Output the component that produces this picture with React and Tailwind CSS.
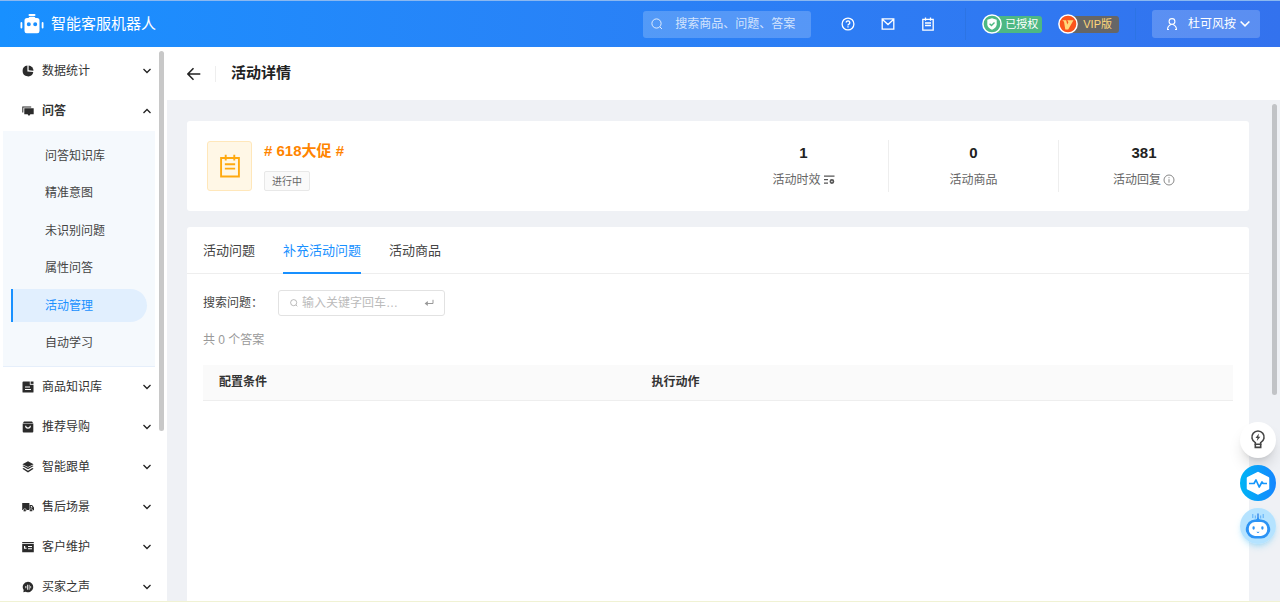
import { useState } from 'react';

const sections = [
  { id: 'product', label: '商品知识库', icon: 'book' },
  { id: 'recommend', label: '推荐导购', icon: 'bag' },
  { id: 'follow', label: '智能跟单', icon: 'layers' },
  { id: 'aftersale', label: '售后场景', icon: 'truck' },
  { id: 'customer', label: '客户维护', icon: 'card' },
  { id: 'voice', label: '买家之声', icon: 'voice' },
];

const qaItems = ['问答知识库', '精准意图', '未识别问题', '属性问答', '活动管理', '自动学习'];

const tabs = ['活动问题', '补充活动问题', '活动商品'];

const MenuIcon = ({ name }) => (
  <svg viewBox="0 0 12 12" className="h-3 w-3 shrink-0 fill-[#2b2b2b]" aria-hidden="true">
    {name === 'pie' && (
      <>
        <path d="M5.4.6A5.4 5.4 0 1 0 11.3 7L5.4 6.4z" />
        <path d="M6.6.5v4.8l4.9.5A5.2 5.2 0 0 0 6.6.5z" />
      </>
    )}
    {name === 'chat' && (
      <>
        <path d="M.3 1.5h8.9v1H1.3v5h-1z" />
        <path d="M2.3 3.3h9.4v6H8.4L7 10.9 5.6 9.3H2.3z" />
      </>
    )}
    {name === 'book' && (
      <>
        <path fillRule="evenodd" d="M1.500.5h6.300v3.200h3.700v7.300a.6.6 0 0 1-.6.6H1.100a.6.6 0 0 1-.6-.6V1.500a1 1 0 0 1 1-1zM3 5.600v1h5v-1zm0 2.500v1h6v-1z" />
        <path d="M8.600.5h2.900v2.400H8.600z" />
      </>
    )}
    {name === 'bag' && (
      <path fillRule="evenodd" d="M2 .5h8L11 2H1zM.7 2.600h10.600v8a.9.9 0 0 1-.9.9H1.600a.9.9 0 0 1-.9-.9zm2.400 2.200a2.900 2.900 0 0 0 5.800 0h-1.100a1.800 1.800 0 0 1-3.600 0z" />
    )}
    {name === 'layers' && (
      <>
        <path d="M6 .3l5.600 2.900L6 6.100.4 3.200z" />
        <path d="M.4 5l1.300-.6L6 6.700l4.300-2.300 1.300.6L6 8.300z" />
        <path d="M.4 7.700l1.300-.6L6 9.700l4.300-2.600 1.300.6L6 11.500z" />
      </>
    )}
    {name === 'truck' && (
      <>
        <path d="M.2 2h7.200v7H.2z" />
        <path fillRule="evenodd" d="M7.600 4h2.500L12 6.500V9.200H7.600zm1.200 1v1.600h1.800L9.600 5z" />
        <circle cx="2.800" cy="9.200" r="1.500" stroke="#fff" strokeWidth=".6" />
        <circle cx="9" cy="9.200" r="1.500" stroke="#fff" strokeWidth=".6" />
      </>
    )}
    {name === 'card' && (
      <>
        <path d="M.2 1h11.600v1.200H.2z" />
        <path fillRule="evenodd" d="M.2 2.900h11.600v8.300H.2zM2 5v2.800h2.600v-1H3.200V5zm4 .1v1h4v-1zm0 2.200v1h4v-1z" />
      </>
    )}
    {name === 'voice' && (
      <path fillRule="evenodd" d="M6 .8a5.200 5.200 0 1 1-2.200 9.900L1.300 11.300l.4-2.300A5.200 5.200 0 0 1 6 .8zM3.400 5v2.200h.9V5zm1.800-1.300v5h.8v-5zm1.500 0v5h.8v-5zM8.400 5v2.200h.7V5z" />
    )}
  </svg>
);

const Chevron = ({ up = false, className = 'h-2 w-2 text-[#222]' }) => (
  <svg viewBox="0 0 8 8" className={className} fill="none" stroke="currentColor" strokeWidth="1.3" aria-hidden="true">
    <path d={up ? 'M.5 6L4 2.500 7.500 6' : 'M.5 2L4 5.500l3.500-3.500'} />
  </svg>
);

const SearchIcon = ({ className }) => (
  <svg viewBox="0 0 12 12" className={className} fill="none" stroke="currentColor" aria-hidden="true">
    <circle cx="5.5" cy="5.5" r="4.6" />
    <path d="M9 9l2 2" />
  </svg>
);

const NoteIcon = ({ className, strokeWidth = 1.3 }) => (
  <svg viewBox="0 0 14 14" className={className} fill="none" stroke="currentColor" strokeWidth={strokeWidth} aria-hidden="true">
    <path d="M1.800 2.300h10.400v10.800H1.800zM4.500.5v3.300M9.500.5v3.300M4 6h6M4 8.500h6" />
  </svg>
);

const BotLogo = () => (
  <svg viewBox="0 0 24 20" className="h-5 w-6" fill="#fff" aria-hidden="true">
    <rect x="8.500" y="0" width="7" height="2" rx="1" />
    <path fillRule="evenodd" d="M7 4h1.500a2 2 0 0 1 2-1.300h3a2 2 0 0 1 2 1.300H17a2.500 2.500 0 0 1 2.500 2.500V17a2.200 2.200 0 0 1-2.200 2.200H6.700A2.200 2.200 0 0 1 4.500 17V6.500A2.500 2.500 0 0 1 7 4zm1.800 4.300a2 2 0 1 0 0 4 2 2 0 0 0 0-4zm6.400 0a2 2 0 1 0 0 4 2 2 0 0 0 0-4z" />
    <rect x=".5" y="8" width="1.800" height="6.500" rx=".9" />
    <rect x="21.700" y="8" width="1.800" height="6.500" rx=".9" />
  </svg>
);

const Header = () => (
  <header className="flex h-[47px] shrink-0 items-center border-t border-[#8bb8f0] bg-linear-to-r from-[#1890ff] to-[#3372ee] px-5 text-white">
    <div className="flex items-center gap-[7px]">
      <BotLogo />
      <span className="text-[15px]">智能客服机器人</span>
    </div>

    <label className="ml-auto flex h-[27px] w-[168px] items-center gap-3 rounded-[3px] bg-white/20 pl-2">
      <SearchIcon className="h-3 w-3 shrink-0 text-white/80" />
      <input
        type="text"
        aria-label="搜索"
        placeholder="搜索商品、问题、答案"
        className="w-full min-w-0 bg-transparent text-xs outline-none placeholder:text-white/75"
      />
    </label>

    <div className="ml-[30px] flex items-center gap-[26px]">
      <button type="button" aria-label="帮助">
        <svg viewBox="0 0 14 14" className="h-3.5 w-3.5" fill="none" stroke="currentColor" strokeWidth="1.3" aria-hidden="true">
          <circle cx="7" cy="7" r="5.9" />
          <path d="M5.200 5.600a1.800 1.800 0 1 1 2.700 1.600c-.6.3-.9.600-.9 1.200M7 9.300v1.200" />
        </svg>
      </button>
      <button type="button" aria-label="消息">
        <svg viewBox="0 0 14 14" className="h-3.5 w-3.5" fill="none" stroke="currentColor" strokeWidth="1.3" aria-hidden="true">
          <path d="M1.200 1.800h11.600v10.400H1.200zM1.500 2.500L7 7.500l5.500-5" />
        </svg>
      </button>
      <button type="button" aria-label="记录">
        <NoteIcon className="h-3.5 w-3.5" />
      </button>
    </div>

    <div className="ml-[30px] flex h-8 items-center gap-4 border-x border-[#2c74e4] pr-4 pl-4">
      <div className="flex items-center">
        <svg viewBox="0 0 20 20" className="z-10 h-5 w-5" aria-hidden="true">
          <circle cx="10" cy="10" r="9.1" fill="#4db883" stroke="#fff" strokeWidth="1.5" />
          <path d="M10 4.300l4.700 1.500v4.400c0 2.600-2 4.300-4.700 5.600-2.700-1.300-4.700-3-4.700-5.600V5.800z" fill="#fff" />
          <path d="M7.600 9.700l1.900 1.900 3-3" fill="none" stroke="#4db883" strokeWidth="1.4" />
        </svg>
        <span className="-ml-2 flex h-[17px] items-center rounded-r-[3px] bg-[#4db883] pr-1 pl-[11px] text-[11px]">
          已授权
        </span>
      </div>
      <div className="flex items-center">
        <svg viewBox="0 0 20 20" className="z-10 h-5 w-5" aria-hidden="true">
          <circle cx="10" cy="10" r="9.1" fill="#fa541c" stroke="#fff" strokeWidth="1.5" />
          <path d="M4.300 6.300h3.900l1 4.300 1.200-2.300-1.200-2h6.300L10.200 15.500H7.300L6 7.800z" fill="#ffd77a" />
        </svg>
        <span className="-ml-2 flex h-[17px] items-center rounded-r-[3px] bg-[#666] pr-[7px] pl-[13px] text-[11px] text-[#ffd77a]">
          VIP版
        </span>
      </div>
    </div>

    <button type="button" className="ml-4 flex h-7 w-[108px] items-center rounded-[3px] bg-white/20 pl-[14px] text-xs">
      <svg viewBox="0 0 12 12" className="h-3 w-3" fill="none" stroke="currentColor" strokeWidth="1.1" aria-hidden="true">
        <circle cx="6" cy="3.5" r="2.9" />
        <path d="M1.500 11.800c0-2.800 1.500-4.500 3.500-5.300M10.500 11.800c0-2.800-1.500-4.500-3.500-5.300M1 11.500h2M9 11.500h2" />
      </svg>
      <span className="mr-1 ml-[10px]">杜可风按</span>
      <Chevron className="h-2.5 w-2.5" />
    </button>
  </header>
);

const MenuRow = ({ icon, label, open = false, onClick }) => (
  <button
    type="button"
    aria-expanded={open}
    onClick={onClick}
    className={`flex h-10 w-full shrink-0 items-center gap-2 pr-2 pl-[22px] text-xs text-[#333] ${open ? 'font-bold' : ''}`}
  >
    <MenuIcon name={icon} />
    <span>{label}</span>
    <span className="ml-auto">
      <Chevron up={open} />
    </span>
  </button>
);

const Sidebar = () => {
  const [active, setActive] = useState('活动管理');
  const [open, setOpen] = useState(true);

  return (
    <aside className="z-10 flex w-[167px] shrink-0 bg-white pt-1">
      <nav className="flex flex-1 flex-col overflow-hidden">
        <MenuRow icon="pie" label="数据统计" />
        <MenuRow icon="chat" label="问答" open={open} onClick={() => setOpen(!open)} />
        {open && (
          <ul className="mr-1 ml-[3px] flex h-[236px] shrink-0 flex-col justify-between border-b border-[#e6effb] bg-[#f5f9fd] px-2 pt-2 pb-1.5">
            {qaItems.map((item) => (
              <li key={item}>
                <a
                  href="#"
                  onClick={() => setActive(item)}
                  className={`flex h-[33px] items-center border-l-2 pl-8 text-xs ${
                    item === active
                      ? 'rounded-r-full border-[#1890ff] bg-[#e1effe] text-[#1890ff]'
                      : 'border-transparent text-[#444]'
                  }`}
                >
                  {item}
                </a>
              </li>
            ))}
          </ul>
        )}
        {sections.map((section) => (
          <MenuRow key={section.id} icon={section.icon} label={section.label} />
        ))}
      </nav>
      {/* Scroll thumb */}
      <div className="mr-[3px] h-[69%] w-[5px] rounded-full bg-[#c8c8c8]" />
    </aside>
  );
};

const Stat = ({ value, label, children }) => (
  <div className="flex h-[52px] w-[170px] flex-col items-center justify-between pt-[3px] pb-1 text-[#666]">
    <strong className="text-[15px] leading-5 text-[#222]">{value}</strong>
    <span className="flex items-center gap-0.5 text-xs leading-4">
      {label}
      {children}
    </span>
  </div>
);

const Summary = () => (
  <section className="flex h-[90px] shrink-0 items-center rounded-[3px] bg-white px-5">
    <div className="flex h-[50px] w-[45px] items-center justify-center rounded-[3px] border border-[#ffe7ba] bg-[#fff7e6] text-[#ffa90f]">
      <NoteIcon className="h-6 w-6" strokeWidth={1.1} />
    </div>
    <div className="ml-3 flex h-[50px] flex-col items-start justify-between">
      <h2 className="text-[15px] leading-5 font-bold text-[#ff8400]"># 618大促 #</h2>
      <span className="flex h-5 items-center rounded-xs border border-[#e8e8e8] bg-[#fafafa] px-[7px] text-[10px] text-[#666]">
        进行中
      </span>
    </div>
    <div className="ml-auto flex divide-x divide-[#eee]">
      <Stat value="1" label="活动时效">
        <svg viewBox="0 0 12 12" className="h-3 w-3" fill="none" stroke="#555" strokeWidth="1.2" aria-hidden="true">
          <path d="M1 2.200h10.500M1 5.700h4M1 9.200h4" />
          <circle cx="8.900" cy="7.500" r="1.800" fill="#555" />
          <circle cx="8.900" cy="7.500" r=".7" fill="#fff" stroke="none" />
        </svg>
      </Stat>
      <Stat value="0" label="活动商品" />
      <Stat value="381" label="活动回复">
        <svg viewBox="0 0 12 12" className="h-3 w-3" fill="none" stroke="#888" aria-hidden="true">
          <circle cx="6" cy="6" r="5" />
          <path d="M6 5.200v3.500M6 3.200v1" />
        </svg>
      </Stat>
    </div>
  </section>
);

const Answers = () => {
  const [tab, setTab] = useState('补充活动问题');

  return (
    <section className="flex flex-1 flex-col rounded-t-[3px] bg-white">
      <div role="tablist" className="flex gap-7 border-b border-[#eee] px-4">
        {tabs.map((name) => (
          <button
            key={name}
            type="button"
            role="tab"
            aria-selected={tab === name}
            onClick={() => setTab(name)}
            className={`-mb-px h-[47px] border-b-2 pt-0.5 text-[13px] ${
              tab === name ? 'border-[#1890ff] text-[#1890ff]' : 'border-transparent text-[#444]'
            }`}
          >
            {name}
          </button>
        ))}
      </div>

      <div className="px-4 pt-4 text-xs">
        <div className="flex items-center">
          <label htmlFor="keyword" className="w-[75px] text-[#444]">搜索问题：</label>
          <div className="flex h-[26px] w-[167px] items-center gap-1 rounded-[3px] border border-[#e2e2e2] pr-2.5 pl-[11px] text-[#999]">
            <SearchIcon className="h-2 w-2 shrink-0" />
            <input
              id="keyword"
              type="text"
              placeholder="输入关键字回车…"
              className="w-full min-w-0 outline-none placeholder:text-[#bbb]"
            />
            <svg viewBox="0 0 10 8" className="h-2 w-2.5 shrink-0" fill="none" stroke="currentColor" aria-hidden="true">
              <path d="M9 .8v3.700H1.500" />
              <path d="M3.800 2L.6 4.500 3.800 7z" fill="currentColor" stroke="none" />
            </svg>
          </div>
        </div>

        <p className="mt-4 leading-4 text-[#999]">共 0 个答案</p>

        <table className="mt-[17px] w-full table-fixed text-left text-[#333]">
          <thead>
            <tr className="h-[35px] border-b border-[#eee] bg-[#fafafa]">
              <th className="w-[42%] px-4">配置条件</th>
              <th className="px-4">执行动作</th>
            </tr>
          </thead>
        </table>
      </div>
    </section>
  );
};

const FloatingTools = () => (
  <div className="absolute right-1 bottom-[57px] z-20 flex flex-col gap-[7px]">
    <button type="button" aria-label="建议" className="flex h-9 w-9 items-center justify-center rounded-full bg-white text-[#444] shadow-lg shadow-black/15">
      <svg viewBox="0 0 20 20" className="h-5 w-5" fill="none" stroke="currentColor" strokeWidth="1.6" aria-hidden="true">
        <path d="M7.300 14.200v-1.600a6.100 6.100 0 1 1 5.400 0v1.600z" />
        <path d="M7.300 14.200v3.200h5.400v-3.200" />
        <path d="M10.900 3.600L7.500 7.900h2L8.800 11.100l3.600-4.300h-2z" fill="currentColor" stroke="none" />
      </svg>
    </button>
    <button type="button" aria-label="诊断" className="h-9 w-9 rounded-full">
      <svg viewBox="0 0 36 36" aria-hidden="true">
        <defs>
          <linearGradient id="pulse" x1="0" x2="1">
            <stop offset="0" stopColor="#00b4f5" />
            <stop offset="1" stopColor="#1586ff" />
          </linearGradient>
        </defs>
        <circle cx="18" cy="18" r="18" fill="url(#pulse)" />
        <path d="M18 8l10 5v10.500L18 28.500 8 23.500V13z" fill="#fff" stroke="#fff" strokeWidth="2.5" strokeLinejoin="round" />
        <path d="M9 18.500h5l2-3.500 3.200 7 2.800-5 1.200 1.500H27" fill="none" stroke="#1596fb" strokeWidth="1.7" strokeLinejoin="round" />
      </svg>
    </button>
    <button type="button" aria-label="机器人助手" className="h-9 w-9 rounded-full shadow-md shadow-sky-500/20">
      <svg viewBox="0 0 36 36" aria-hidden="true">
        <circle cx="18" cy="18" r="18" fill="#b5e3ff" />
        <path d="M12.800 6v4M15.300 7.500v3M20.700 7.500v3M23.200 6v4" stroke="#5aaef8" />
        <path d="M18 5.500v6" stroke="#2b7fe8" strokeWidth="1.3" />
        <path d="M12.500 12.500c3 0 4.500-1 5.500-3.500 1 2.500 2.500 3.500 5.500 3.500z" fill="#2b93f5" />
        <rect x="5.800" y="18" width="24.400" height="7" rx="3" fill="#2b93f5" />
        <rect x="7.500" y="12.800" width="21" height="16.400" rx="7.500" fill="#fff" stroke="#2b93f5" strokeWidth="2.6" />
        <rect x="12.500" y="18.300" width="2.200" height="3.400" rx="1.100" fill="#2b93f5" />
        <rect x="21.300" y="18.300" width="2.200" height="3.400" rx="1.100" fill="#2b93f5" />
        <path d="M16.800 24q1.200 1.200 2.400 0" fill="none" stroke="#2b93f5" />
      </svg>
    </button>
  </div>
);

const App = () => (
  <div className="relative flex h-screen flex-col overflow-hidden border-b border-[#f0f2d4] bg-[#eff1f5] font-['Liberation_Sans','Noto_Sans_CJK_SC',sans-serif]">
    <Header />
    <div className="flex min-h-0 flex-1">
      <Sidebar />
      <main className="flex min-w-0 flex-1 flex-col">
        <div className="flex h-[53px] shrink-0 items-center bg-white pl-5">
          <button type="button" aria-label="返回">
            <svg viewBox="0 0 14 14" className="h-3.5 w-3.5" fill="none" stroke="#222" strokeWidth="1.5" aria-hidden="true">
              <path d="M13.300 7H1.200M6.500 1.200L.9 7l5.600 5.800" />
            </svg>
          </button>
          <h1 className="ml-[14px] flex h-4 items-center border-l border-[#eee] pl-[15px] text-[15px] font-bold text-[#222]">
            活动详情
          </h1>
        </div>
        <div className="flex min-h-0 flex-1">
          <div className="flex min-w-0 flex-1 flex-col gap-4 pt-[21px] pr-[23px] pl-5">
            <Summary />
            <Answers />
          </div>
          {/* Scroll thumb */}
          <div className="mt-1 mr-[3px] h-[58%] w-[5px] rounded-full bg-[#c1c3c6]" />
        </div>
      </main>
    </div>
    <FloatingTools />
  </div>
);

export default App;
